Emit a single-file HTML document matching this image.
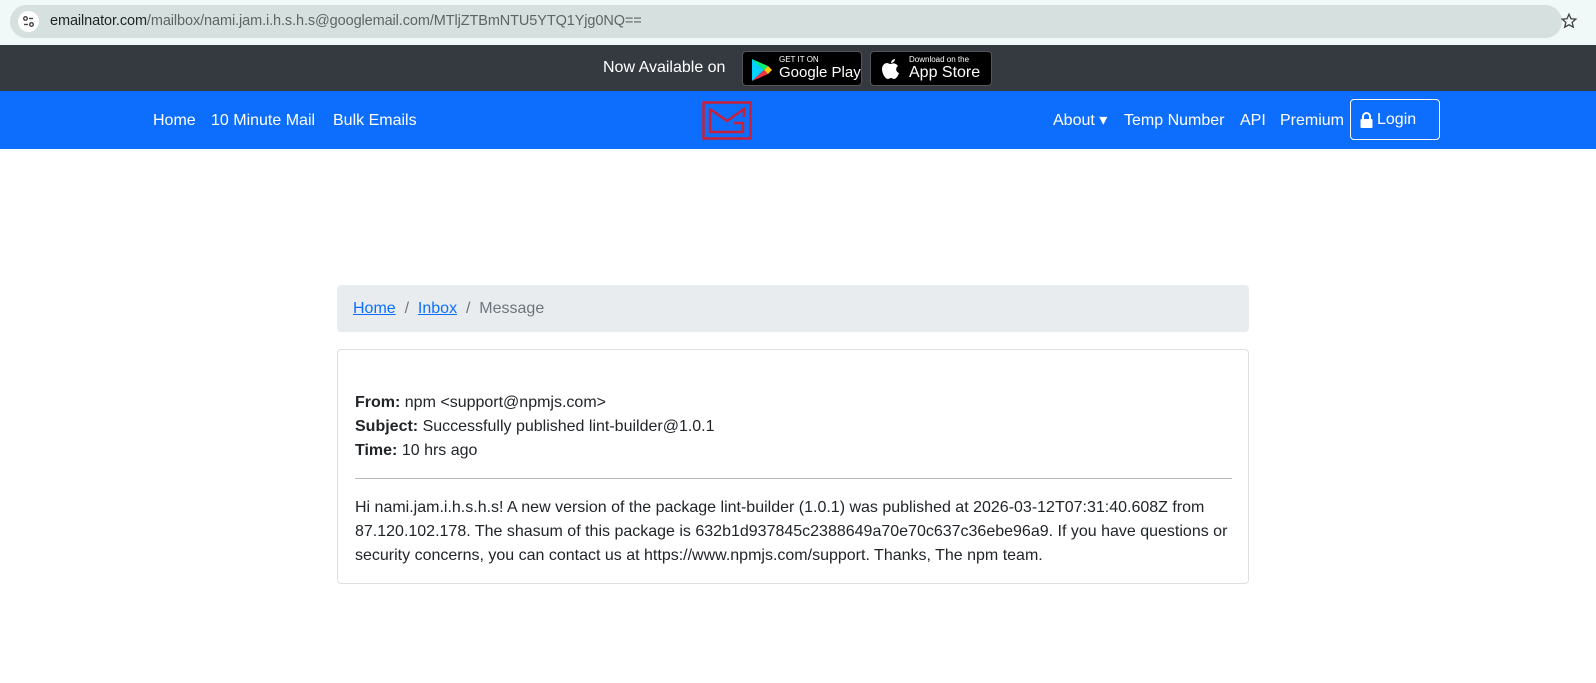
<!DOCTYPE html>
<html><head><meta charset="utf-8"><style>
*{box-sizing:border-box;margin:0;padding:0}
body{width:1596px;height:683px;overflow:hidden;background:#fff;font-family:"Liberation Sans",Roboto,sans-serif;color:#212529;position:relative}
.abar{position:absolute;left:0;top:0;width:1596px;height:45px;background:#f1f8f8}
.url{position:absolute;left:10px;top:5px;width:1552px;height:33px;border-radius:17px;background:#d6e0df}
.url .ic{position:absolute;left:8px;top:6px;width:21px;height:21px;border-radius:50%;background:#fff}
.url .t{position:absolute;left:40px;top:8px;font-size:14.5px;color:#5f6464;letter-spacing:-0.1px}
.url .t b{font-weight:normal;color:#1f2323}
.top{position:absolute;left:0;top:45px;width:1596px;height:46px;background:#343a40}
.top .na{position:absolute;left:603px;top:14px;color:#fff;font-size:16px}
.badge{position:absolute;top:6px;height:35px;background:#000;border-radius:4px;border:1px solid #555;color:#fff}
.nav{position:absolute;left:0;top:91px;width:1596px;height:58px;background:#0d6efd}
.nav a{position:absolute;top:21px;color:#fff;font-size:16px;text-decoration:none}
.login{position:absolute;left:1350px;top:8px;width:90px;height:41px;border:1px solid #fff;border-radius:4px}
.bc{position:absolute;left:337px;top:285px;width:912px;height:47px;background:#e9ecef;border-radius:4px;font-size:16px;padding:15px 16px;color:#6c757d}
.bc a{color:#0d6efd;text-decoration:underline}
.card{position:absolute;left:337px;top:349px;width:912px;height:235px;border:1px solid #dfdfdf;border-radius:4px;font-size:16px;line-height:24px}
.card hr{position:absolute;left:17px;top:128px;width:877px;border:0;border-top:1px solid #bbb}
</style></head><body>
<div class="abar"><div class="url"><div class="ic"><svg width="21" height="21" viewBox="0 0 21 21" fill="none" stroke="#444" stroke-width="1.4"><circle cx="7.5" cy="7.5" r="1.8"/><line x1="11" y1="7.5" x2="15" y2="7.5"/><circle cx="13.5" cy="13.5" r="1.8"/><line x1="6" y1="13.5" x2="10" y2="13.5"/></svg></div>
<div class="t"><b>emailnator.com</b>/mailbox/nami.jam.i.h.s.h.s@googlemail.com/MTljZTBmNTU5YTQ1Yjg0NQ==</div>
<svg style="position:absolute;left:1550px;top:7px" width="18" height="18" viewBox="0 0 24 24" fill="none" stroke="#444" stroke-width="1.8"><path d="M12 3l2.7 6 6.3.6-4.8 4.2 1.5 6.4L12 17l-5.7 3.2 1.5-6.4L3 9.6l6.3-.6z"/></svg></div></div>
<div class="top"><span class="na">Now Available on</span>
<div class="badge" style="left:742px;width:120px"><svg style="position:absolute;left:8px;top:6px" width="22" height="24" viewBox="0 0 22 24"><path d="M1 1l12 11L1 23z" fill="#00d2ff"/><path d="M1 1l12 11 4-4z" fill="#00f076"/><path d="M1 23l12-11 4 4z" fill="#f43249"/><path d="M17 8l4 4-4 4-4-4z" fill="#ffc900"/></svg><span style="position:absolute;left:36px;top:3px;font-size:8px">GET IT ON</span><span style="position:absolute;left:36px;top:12px;font-size:15px">Google Play</span></div>
<div class="badge" style="left:870px;width:122px"><svg style="position:absolute;left:10px;top:6px" width="20" height="23" viewBox="0 0 20 23"><path d="M10 6c2-1 5-1 7 2-3 2-2 6 1 7-1 3-3 6-5 6-1 0-2-1-3-1s-2 1-3 1c-3 0-6-6-6-10 0-4 3-6 5-6 1 0 2 1 4 1z" fill="#fff"/><path d="M10 5c0-2 2-4 4-4 0 2-2 4-4 4z" fill="#fff"/></svg><span style="position:absolute;left:38px;top:3px;font-size:8px">Download on the</span><span style="position:absolute;left:38px;top:12px;font-size:16px">App Store</span></div></div>
<div class="nav">
<a style="left:153px">Home</a><a style="left:211px">10 Minute Mail</a><a style="left:333px">Bulk Emails</a>
<svg style="position:absolute;left:702px;top:10px" width="50" height="39" viewBox="0 0 50 39" fill="none" stroke="#c8203a" stroke-width="2.5"><rect x="1.5" y="1.5" width="47" height="36"/><path d="M8 8v23h33v-9h-9M8 8l17 12 17-12v8"/></svg>
<a style="left:1053px;top:19px">About ▾</a><a style="left:1124px">Temp Number</a><a style="left:1240px">API</a><a style="left:1280px">Premium</a>
<div class="login"><svg style="position:absolute;left:9px;top:12px" width="13" height="16" viewBox="0 0 13 16"><path d="M3 7V4.5a3.5 3.5 0 0 1 7 0V7" stroke="#fff" stroke-width="2" fill="none"/><rect x="0.5" y="7" width="12" height="9" rx="1" fill="#fff"/></svg><span style="position:absolute;left:26px;top:11px;color:#fff;font-size:16px">Login</span></div></div>
<div class="bc"><a>Home</a>&nbsp;&nbsp;/&nbsp;&nbsp;<a>Inbox</a>&nbsp;&nbsp;/&nbsp;&nbsp;Message</div>
<div class="card">
<div style="position:absolute;left:17px;top:41px"><b>From:</b> npm &lt;support@npmjs.com&gt;<br><b>Subject:</b> Successfully published lint-builder@1.0.1<br><b>Time:</b> 10 hrs ago</div>
<hr>
<div style="position:absolute;left:17px;top:146px;width:880px">Hi nami.jam.i.h.s.h.s! A new version of the package lint-builder (1.0.1) was published at 2026-03-12T07:31:40.608Z from 87.120.102.178. The shasum of this package is 632b1d937845c2388649a70e70c637c36ebe96a9. If you have questions or security concerns, you can contact us at https://www.npmjs.com/support. Thanks, The npm team.</div>
</div>
</body></html>
